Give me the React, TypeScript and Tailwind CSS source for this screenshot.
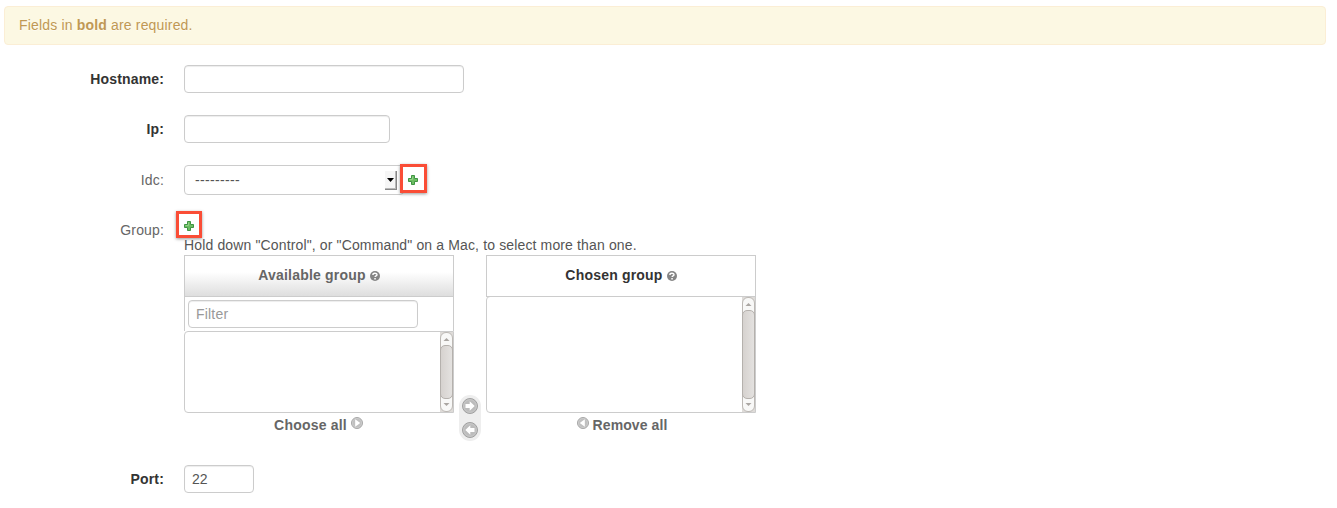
import type { ReactNode } from "react";

const field =
  "block h-7 rounded-[4px] border border-[#cccccc] bg-white text-[14px] leading-5 text-[#555555] shadow-[inset_0_1px_1px_rgba(0,0,0,0.075)] outline-none placeholder:text-[#999999]";

function Row({ label, required = false, children }: { label: string; required?: boolean; children: ReactNode }) {
  return (
    <div className="flex min-h-[50px] items-start">
      <label
        className={
          "mr-5 w-40 shrink-0 text-right " +
          (required ? "pt-1 font-bold tracking-[0.15px] text-[#333333]" : "pt-[5px] tracking-[0.15px] text-[#666666]")
        }
      >
        {label}
      </label>
      {children}
    </div>
  );
}

function Plus() {
  return (
    <svg width="10" height="10" viewBox="0 0 10 10" className="block shrink-0">
      <path d="M3.5.5h3v3h3v3h-3v3h-3v-3h-3v-3h3z" fill="#6cbd62" stroke="#3f9543" />
      <path d="M4.5 1.5v3h-3" fill="none" stroke="#93d088" />
    </svg>
  );
}

function AddButton({ compact = false }: { compact?: boolean }) {
  return (
    <button
      className={
        "flex justify-start border-[3px] border-[#fa4d36] bg-white shadow-[0_1px_3px_rgba(0,0,0,0.4)] " +
        (compact ? "h-[27px] w-[26px] pt-[7px] pl-[5px]" : "h-[29px] w-[27px] pt-2 pl-[5px]")
      }
    >
      <Plus />
    </button>
  );
}

function Help() {
  return (
    <svg width="10" height="10" viewBox="0 0 10 10" className="mt-px ml-1 shrink-0">
      <circle cx="5" cy="5" r="5" fill="#858585" />
      <path d="M2.9 3.9C2.9 1.7 7 1.7 7 3.8C7 5 5.1 4.8 5.1 6.1" fill="none" stroke="white" strokeWidth="1.4" />
      <path d="M4.3 7h1.5v1.4H4.3z" fill="white" />
    </svg>
  );
}

function Arrow({ left = false }: { left?: boolean }) {
  return (
    <svg width="16" height="16" viewBox="0 0 16 16">
      <circle cx="8" cy="8" r="7.5" fill="#bcbcbc" stroke="#a0a0a0" />
      <circle cx="8" cy="8" r="6.3" fill="none" stroke="#c9c9c9" />
      <path
        d={left ? "M12.5 6H8.3V3.3L3.3 8l5 4.7V10h4.2z" : "M3.5 6h4.2V3.3l5 4.7-5 4.7V10H3.5z"}
        fill="white"
      />
    </svg>
  );
}

function SmallArrow({ left = false }: { left?: boolean }) {
  return (
    <svg width="12" height="12" viewBox="0 0 12 12" className={"mb-1 shrink-0 " + (left ? "rotate-180" : "")}>
      <circle cx="6" cy="6" r="5.5" fill="#c0c0c0" stroke="#a8a8a8" />
      <circle cx="6" cy="6" r="4.6" fill="none" stroke="#cecece" strokeWidth=".7" />
      <path d="M4.2 2.2v7.6L9.2 6z" fill="white" />
    </svg>
  );
}

function ScrollBar() {
  return (
    <div className="w-[13px] bg-[#dedbd8]">
      <div className="flex h-full flex-col rounded-[6px] border border-[#bcb8b4] bg-[#f8f8f7]">
        <svg width="11" height="12" viewBox="0 0 11 12" className="block shrink-0">
          <path d="M2.5 8L5.5 5l3 3z" fill="#aaa6a2" />
        </svg>
        <div className="-mx-px flex-1 rounded-[5px] border border-[#b5b1ad] bg-linear-to-r from-[#d6d2cf] to-[#e4e2e0]" />
        <svg width="11" height="12" viewBox="0 0 11 12" className="block shrink-0">
          <path d="M2.5 4L5.5 7l3-3z" fill="#aaa6a2" />
        </svg>
      </div>
    </div>
  );
}

export default function App() {
  return (
    <main className="h-[508px] w-[1337px] overflow-hidden bg-white pt-[6px] pl-1 font-['Liberation_Sans',Arial,sans-serif] text-[14px] leading-5 text-[#555555]">
      <div className="mb-5 h-[39px] w-[1322px] rounded-[4px] border border-[#fbeed5] bg-[#fcf8e3] px-[14px] py-2 tracking-[0.17px] text-[#c09853] [text-shadow:0_1px_0_rgba(255,255,255,0.5)]">
        Fields in <strong>bold</strong> are required.
      </div>

      <Row label="Hostname:" required>
        <input className={field + " w-[280px] px-2"} />
      </Row>
      <Row label="Ip:" required>
        <input className={field + " w-[206px] px-2"} />
      </Row>
      <Row label="Idc:">
        <div className="flex h-[30px]">
          <button className="flex h-[30px] w-[220px] items-center justify-between rounded-[4px] border border-[#cccccc] bg-white pr-[6px] pl-[10px]">
            <span className="tracking-[0.33px]">---------</span>
            <span className="flex h-[19px] w-3 items-center justify-center border-r border-b border-[#888888] bg-[#f6f6f6] shadow-[inset_-1px_-1px_0_#b8b8b8]">
              <svg width="7" height="4" viewBox="0 0 7 4">
                <path d="M0 0h7L3.5 4z" fill="black" />
              </svg>
            </span>
          </button>
          <div className="-mt-px -ml-1">
            <AddButton />
          </div>
        </div>
      </Row>

      <div className="h-[250px]">
        <Row label="Group:">
          <div>
            <div className="flow-root h-5">
              <div className="-mt-1 -ml-2">
                <AddButton compact />
              </div>
            </div>
            <p className="relative tracking-[0.14px]">
              Hold down "Control", or "Command" on a Mac, to select more than one.
            </p>
            <div className="flex">
              <section className="w-[270px]">
                <h2 className="flex h-[42px] items-center justify-center border border-[#cccccc] bg-linear-to-b from-white from-40% to-[#dedede] pb-[2px] font-bold tracking-[0.2px] text-[#666666]">
                  Available group <Help />
                </h2>
                <div className="h-[34px] border-x border-[#cccccc] pt-[3px] pl-[3px]">
                  <input placeholder="Filter" className={field + " w-[230px] px-[7px] tracking-[0.2px]"} />
                </div>
                <div className="flex h-[82px] justify-end rounded-l-[4px] border border-[#cccccc]">
                  <ScrollBar />
                </div>
                <button className="flex h-[23px] w-full items-center justify-center gap-1 pr-px font-bold tracking-[0.2px] text-[#666666]">
                  Choose all
                  <SmallArrow />
                </button>
              </section>
              <div className="mx-[5px] mt-[140px] flex h-[46px] w-[22px] flex-col items-center justify-between rounded-[11px] bg-[#eeeeee] py-[3px]">
                <Arrow />
                <Arrow left />
              </div>
              <section className="w-[270px]">
                <h2 className="flex h-[42px] items-center justify-center border border-[#cccccc] pb-[2px] font-bold tracking-[0.2px] text-[#333333]">
                  Chosen group <Help />
                </h2>
                <div className="-mt-px flex h-[117px] justify-end rounded-l-[4px] border border-[#cccccc]">
                  <ScrollBar />
                </div>
                <button className="flex h-[23px] w-full items-center justify-center gap-1 pl-[2px] font-bold tracking-[0.1px] text-[#666666]">
                  <SmallArrow left />
                  Remove all
                </button>
              </section>
            </div>
          </div>
        </Row>
      </div>

      <Row label="Port:" required>
        <input defaultValue="22" className={field + " w-[70px] px-[7px]"} />
      </Row>
    </main>
  );
}
